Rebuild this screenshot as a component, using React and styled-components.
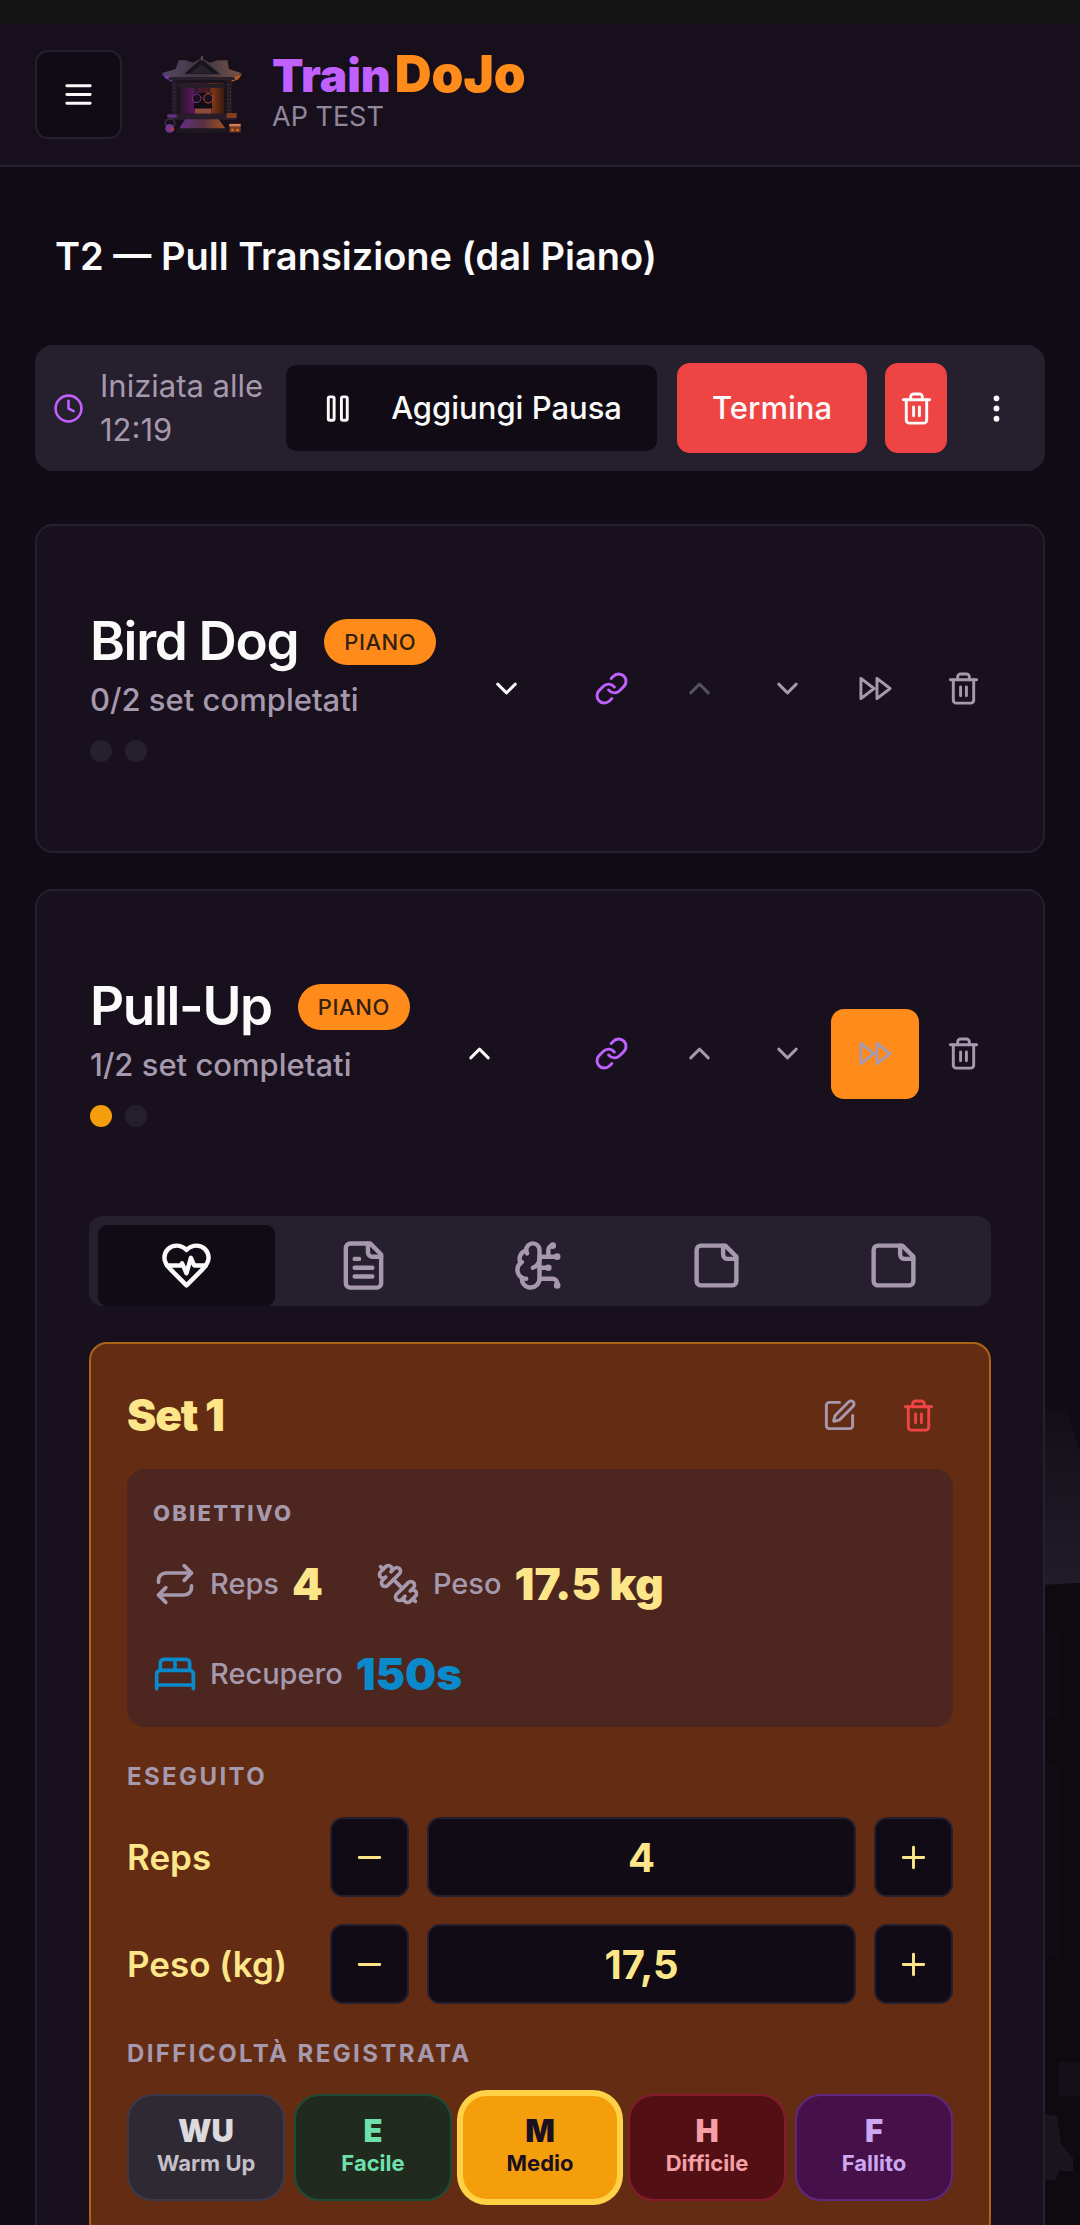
// module dependencies
import React, { useState } from 'react';
import styled, { createGlobalStyle, css } from 'styled-components';
import { BrainCircuit, ChevronDown, ChevronUp, Link, SquarePen, Trash2 } from 'lucide-react';

const colors = {
  background: '#100b14',
  card: '#18101d',
  border: '#261f2d',
  text: '#fafafa',
  muted: '#a699ae',
  purple: '#c061ff',
  orange: '#ff8c1a',
  amber: '#f59e0b',
  cream: '#fde68a',
  red: '#ef4444'
};

const GlobalStyle = createGlobalStyle`
  *, *::before, *::after {
    box-sizing: border-box;
  }
  body {
    margin: 0;
    background: ${colors.background};
    color: ${colors.text};
    font-family: Inter, 'Liberation Sans', sans-serif;
    font-size: 31px;
    line-height: 44px;
  }
  button, input {
    font: inherit;
    color: inherit;
    margin: 0;
  }
  h1, h2, h3, h4, p {
    margin: 0;
  }
  svg {
    display: block;
    flex: none;
  }
`;

const Shell = styled.div`
  position: relative;
  isolation: isolate;
  display: flex;
  flex-direction: column;
  height: 100vh;
`;

const StatusStrip = styled.div`
  flex: none;
  height: 24px;
  background: #141414;
`;

const Backdrop = styled.svg`
  position: absolute;
  right: 0;
  bottom: 0;
  z-index: -1;
`;

const TopBar = styled.header`
  flex: none;
  display: flex;
  align-items: center;
  gap: 38px;
  padding: 26px 35px;
  background: #17101c;
  border-bottom: 2px solid ${colors.border};
`;

const MenuButton = styled.button`
  display: flex;
  align-items: center;
  justify-content: center;
  width: 87px;
  height: 89px;
  padding: 0;
  background: ${colors.background};
  border: 2px solid ${colors.border};
  border-radius: 13px;
`;

const Brand = styled.a`
  display: flex;
  align-items: center;
  gap: 27px;
  color: inherit;
  text-decoration: none;
`;

const BrandName = styled.div`
  display: flex;
  align-items: baseline;
  gap: 4px;
  font-size: 46px;
  font-weight: 900;
  line-height: 44px;
`;

const BrandTrain = styled.span`
  color: ${colors.purple};
`;

const BrandDojo = styled.span`
  color: ${colors.orange};
  font-size: 51px;
`;

const BrandUser = styled.div`
  color: #91869b;
  font-size: 27px;
  line-height: 40px;
`;

const Main = styled.main`
  flex: 1;
  min-height: 0;
  overflow-y: auto;
  scrollbar-width: none;
  padding: 0 35px 36px;
`;

const PageTitle = styled.h1`
  padding: 65px 20px;
  font-size: 38px;
  font-weight: 600;
  line-height: 48px;
`;

const SessionBar = styled.section`
  display: flex;
  align-items: center;
  gap: 18px;
  padding: 18px;
  margin-bottom: 53px;
  background: ${colors.border};
  border-radius: 18px;
`;

const StartedAt = styled.div`
  flex: 1;
  display: flex;
  align-items: center;
  gap: 16px;
  color: ${colors.muted};

  svg {
    color: ${colors.purple};
  }
`;

const BarButton = styled.button`
  display: flex;
  align-items: center;
  justify-content: center;
  height: 90px;
  padding: 0 33px;
  background: transparent;
  border: 2px solid transparent;
  border-radius: 13px;
  font-weight: 500;

  ${props => props.$compact && css`
    width: 62px;
    padding: 0;
  `}

  ${props => props.$variant === 'outline' && css`
    gap: 35px;
    padding: 0 35px;
    background: ${colors.background};
    border-color: ${colors.border};
  `}

  ${props => props.$variant === 'danger' && css`
    background: ${colors.red};
    border-color: ${colors.red};
  `}
`;

const Card = styled.article`
  margin-bottom: 36px;
  background: ${colors.card};
  border: 2px solid ${colors.border};
  border-radius: 18px;
`;

const CardHead = styled.div`
  display: flex;
  align-items: center;
  justify-content: space-between;
  padding: 89px 36px 89px 53px;
`;

const Toggle = styled.div`
  display: flex;
  align-items: center;
  gap: 26px;
`;

const TitleRow = styled.div`
  display: flex;
  align-items: center;
  gap: 26px;
`;

const ExerciseName = styled.h2`
  font-size: 53px;
  font-weight: 600;
  line-height: 53px;
  letter-spacing: -0.025em;
`;

const Badge = styled.span`
  padding: 0 20px;
  background: ${colors.orange};
  border-radius: 23px;
  color: #33200f;
  font-size: 22px;
  font-weight: 500;
  line-height: 46px;
  letter-spacing: 0.025em;
`;

const Progress = styled.p`
  margin-top: 10px;
  color: ${colors.muted};
  font-weight: 500;
`;

const Dots = styled.div`
  display: flex;
  gap: 13px;
  margin-top: 18px;
`;

const Dot = styled.span`
  width: 22px;
  height: 22px;
  border-radius: 50%;
  background: ${props => props.$done ? colors.amber : colors.border};
`;

const Actions = styled.div`
  display: flex;
`;

const ActionButton = styled.button`
  display: flex;
  align-items: center;
  justify-content: center;
  width: 88px;
  height: 90px;
  padding: 0;
  background: ${props => props.$active ? colors.orange : 'transparent'};
  border: none;
  border-radius: 13px;
  color: ${props => props.$color || colors.muted};

  &:disabled {
    color: #575060;
  }
`;

const CardBody = styled.div`
  padding: 0 52px 52px;
`;

const TabList = styled.div`
  display: grid;
  grid-template-columns: repeat(5, 1fr);
  padding: 9px 9px 0;
  margin-bottom: 36px;
  background: ${colors.border};
  border-radius: 13px;
`;

const Tab = styled.button`
  display: flex;
  align-items: center;
  justify-content: center;
  height: 81px;
  padding: 0;
  background: ${props => props.$selected ? colors.background : 'transparent'};
  border: none;
  border-radius: 9px;
  color: ${props => props.$selected ? colors.text : colors.muted};
`;

const SetCard = styled.section`
  display: flex;
  flex-direction: column;
  gap: 27px;
  padding: 36px;
  background: #632c13;
  border: 2px solid #ab6514;
  border-radius: 18px;
`;

const SetTop = styled.div`
  display: flex;
  flex-direction: column;
  gap: 18px;
`;

const SetHead = styled.div`
  display: flex;
  align-items: center;
  justify-content: space-between;
`;

const SetName = styled.h3`
  color: ${colors.cream};
  font-size: 44px;
  font-weight: 900;
  line-height: 53px;
  letter-spacing: -0.025em;
`;

const SetActions = styled.div`
  display: flex;
  gap: 9px;
`;

const SetAction = styled.button`
  display: flex;
  align-items: center;
  justify-content: center;
  width: 70px;
  height: 71px;
  padding: 0;
  background: transparent;
  border: none;
  color: ${props => props.$danger ? colors.red : colors.muted};
`;

const Target = styled.div`
  padding: 26px;
  background: #4c261f;
  border-radius: 18px;
`;

const TargetTitle = styled.h4`
  margin-bottom: 26px;
  color: ${colors.muted};
  font-size: 22px;
  font-weight: 800;
  line-height: 36px;
  letter-spacing: 0.1em;
`;

const Metrics = styled.div`
  display: flex;
  flex-wrap: wrap;
  gap: 36px 53px;
`;

const Metric = styled.div`
  display: flex;
  align-items: center;
  gap: 13px;
  color: ${colors.muted};
  font-size: 29px;
  font-weight: 500;

  svg {
    color: ${props => props.$rest ? '#0a8acb' : colors.muted};
  }
`;

const MetricValue = styled.strong`
  color: ${props => props.$rest ? '#0a8acb' : colors.cream};
  font-size: 44px;
  font-weight: 900;
  line-height: 54px;
`;

const Section = styled.div`
  display: flex;
  flex-direction: column;
  gap: 18px;
`;

const SectionTitle = styled.h4`
  color: ${colors.muted};
  font-size: 24px;
  font-weight: 700;
  line-height: 45px;
  letter-spacing: 0.1em;
`;

const Fields = styled.div`
  display: grid;
  gap: 27px;
`;

const Field = styled.div`
  display: grid;
  grid-template-columns: 185px 79px 1fr 79px;
  align-items: center;
  gap: 18px;
  color: ${colors.cream};
`;

const FieldLabel = styled.label`
  font-size: 35px;
  font-weight: 600;
  white-space: nowrap;
`;

const StepButton = styled.button`
  display: flex;
  align-items: center;
  justify-content: center;
  height: 80px;
  padding: 0;
  background: ${colors.background};
  border: 2px solid ${colors.border};
  border-radius: 13px;
`;

const FieldInput = styled.input`
  width: 100%;
  height: 80px;
  padding: 0;
  background: ${colors.background};
  border: 2px solid ${colors.border};
  border-radius: 13px;
  outline: none;
  font-size: 40px;
  font-weight: 700;
  text-align: center;
`;

const Levels = styled.div`
  display: grid;
  grid-template-columns: repeat(5, 1fr);
  gap: 9px;
`;

const levelColors = {
  WU: { background: '#2e2933', border: '#3d384a', text: '#c3bfc8', code: '#dcdade' },
  E: { background: '#202a1e', border: '#1b4d35', text: '#6ee0ab' },
  M: { background: '#f59e0b', border: '#ffd147', text: '#1a1020' },
  H: { background: '#521015', border: '#851b2c', text: '#f5a0a6' },
  F: { background: '#461148', border: '#5f2780', text: '#cda8f0' }
};

const Level = styled.button`
  display: flex;
  flex-direction: column;
  align-items: center;
  justify-content: center;
  height: 107px;
  padding: 0;
  background: ${props => levelColors[props.$code].background};
  border: 2px solid ${props => levelColors[props.$code].border};
  border-radius: 26px;
  box-shadow: ${props => props.$selected ? `0 0 0 4px ${levelColors[props.$code].border}` : 'none'};
  color: ${props => levelColors[props.$code].text};
`;

const LevelCode = styled.span`
  color: ${props => levelColors[props.$code].code || 'inherit'};
  font-size: 31px;
  font-weight: 900;
  line-height: 31px;
`;

const LevelName = styled.span`
  font-size: 22px;
  font-weight: 700;
  line-height: 35px;
`;

// icons
const Icon = ({ size = 35, children }) => (
  <svg
    width={size}
    height={size}
    viewBox="0 0 24 24"
    fill="none"
    stroke="currentColor"
    strokeWidth="2"
    strokeLinecap="round"
    strokeLinejoin="round"
    aria-hidden="true"
  >
    {children}
  </svg>
);

const MenuIcon = () => <Icon><path d="M4 6h16M4 12h16M4 18h16" /></Icon>;

const ClockIcon = () => (
  <Icon size={31}>
    <circle cx="12" cy="12" r="10" />
    <path d="M12 6v6l4 2" />
  </Icon>
);

const PauseIcon = () => (
  <Icon>
    <rect x="5" y="4" width="4" height="16" rx="1" />
    <rect x="14" y="4" width="4" height="16" rx="1" />
  </Icon>
);

const MoreIcon = () => (
  <Icon>
    <circle cx="12" cy="12" r="1" />
    <circle cx="12" cy="5" r="1" />
    <circle cx="12" cy="19" r="1" />
  </Icon>
);

const SkipIcon = () => (
  <Icon>
    <path d="m13 19 9-7-9-7zM2 19l9-7-9-7z" />
  </Icon>
);

const HeartIcon = () => (
  <Icon size={53}>
    <path d="M19 14c1.49-1.46 3-3.21 3-5.5A5.5 5.5 0 0 0 16.5 3c-1.76 0-3 .5-4.5 2-1.5-1.5-2.74-2-4.5-2A5.5 5.5 0 0 0 2 8.5c0 2.3 1.5 4.05 3 5.5l7 7Z" />
    <path d="M3.22 12H9.5l.5-1 2 4.5 2-7 1.5 3.5h5.27" />
  </Icon>
);

const FileIcon = () => (
  <Icon size={53}>
    <path d="M15 2H6a2 2 0 0 0-2 2v16a2 2 0 0 0 2 2h12a2 2 0 0 0 2-2V7Z" />
    <path d="M14 2v4a2 2 0 0 0 2 2h4M10 9H8M16 13H8M16 17H8" />
  </Icon>
);

const NoteIcon = () => (
  <Icon size={53}>
    <path d="M16 3H5a2 2 0 0 0-2 2v14a2 2 0 0 0 2 2h14a2 2 0 0 0 2-2V8Z" />
    <path d="M15 3v4a2 2 0 0 0 2 2h4" />
  </Icon>
);

const RepeatIcon = () => (
  <Icon size={44}>
    <path d="m17 2 4 4-4 4" />
    <path d="M3 11v-1a4 4 0 0 1 4-4h14" />
    <path d="m7 22-4-4 4-4" />
    <path d="M21 13v1a4 4 0 0 1-4 4H3" />
  </Icon>
);

const DumbbellIcon = () => (
  <Icon size={44}>
    <path d="M14.4 14.4 9.6 9.6" />
    <path d="M18.657 21.485a2 2 0 1 1-2.829-2.828l-1.767 1.768a2 2 0 1 1-2.829-2.829l6.364-6.364a2 2 0 1 1 2.829 2.829l-1.768 1.767a2 2 0 1 1 2.828 2.829z" />
    <path d="m21.5 21.5-1.4-1.4M3.9 3.9 2.5 2.5" />
    <path d="M6.404 12.768a2 2 0 1 1-2.829-2.829l1.768-1.767a2 2 0 1 1-2.828-2.829l2.828-2.828a2 2 0 1 1 2.829 2.828l1.767-1.768a2 2 0 1 1 2.829 2.829z" />
  </Icon>
);

const BedIcon = () => (
  <Icon size={44}>
    <path d="M2 20v-8a2 2 0 0 1 2-2h16a2 2 0 0 1 2 2v8" />
    <path d="M4 10V6a2 2 0 0 1 2-2h12a2 2 0 0 1 2 2v4M12 4v6M2 18h20" />
  </Icon>
);

const MinusIcon = () => <Icon><path d="M5 12h14" /></Icon>;
const PlusIcon = () => <Icon><path d="M5 12h14M12 5v14" /></Icon>;

// small temple lit purple from the left and orange from the right
const TempleLogo = () => (
  <svg width="85" height="78" viewBox="60 47 255 234" aria-hidden="true">
    <defs>
      <linearGradient id="roof" x1="0" x2="1">
        <stop offset="0" stopColor="#574765" />
        <stop offset="0.5" stopColor="#3c3541" />
        <stop offset="1" stopColor="#765548" />
      </linearGradient>
      <linearGradient id="wall" x1="0" x2="1">
        <stop offset="0" stopColor="#2b1731" />
        <stop offset="0.3" stopColor="#571757" />
        <stop offset="0.55" stopColor="#40191f" />
        <stop offset="0.75" stopColor="#7b3618" />
        <stop offset="1" stopColor="#39190f" />
      </linearGradient>
      <linearGradient id="steps" x1="0" x2="1">
        <stop offset="0" stopColor="#65308a" />
        <stop offset="0.5" stopColor="#573143" />
        <stop offset="1" stopColor="#a05220" />
      </linearGradient>
    </defs>
    <path d="M98 112h178v108H98z" fill="#1b141d" />
    <path d="M122 128h130v92H122z" fill="url(#wall)" />
    <path d="M116 60h22l20 7 26-13 26 13 22-7h30l5 26 38 13-20 12H86L65 99l42-13z" fill="url(#roof)" />
    <path d="M184 54 130 102h112z" fill="#18141c" stroke="#423844" strokeWidth="3" />
    <path d="M184 72 152 98h66z" fill="#29222e" />
    <path d="M183 48h6v12h-6z" fill="#5d5060" />
    <path d="m66 101 30 12 1 12-21-11z" fill="#7a35a9" />
    <path d="m306 101-32 12-2 13 24-10z" fill="#b95b20" />
    <path d="M86 111h198v8H86z" fill="#28212b" />
    <path d="M96 119h14v103H96zM261 119h14v103h-14z" fill="#211b28" />
    <path d="M98 130v82M105 130v82" stroke="#4b2f5e" strokeWidth="2" strokeDasharray="6 5" />
    <path d="M264 130v82M271 130v82" stroke="#76351e" strokeWidth="2" strokeDasharray="6 5" />
    <path d="M112 130h142v12H112z" fill="#241c26" />
    <path d="M162 132h13v24h-13zM202 132h8v22h-8z" fill="#292027" />
    <path d="M162 158h54v46h-54z" fill="#120c15" />
    <circle cx="170" cy="174" r="13" fill="#1b101f" stroke="#7e3988" strokeWidth="3" />
    <circle cx="205" cy="174" r="14" fill="#1b101f" stroke="#c44b3c" strokeWidth="3" />
    <path d="M165 205h48v15h-48z" fill="#8c4c3b" />
    <path d="M84 220h204v18H84z" fill="#291d2b" />
    <path d="M82 222h28v10H82z" fill="#633184" />
    <path d="M260 218h30v15h-30z" fill="#853d1c" />
    <path d="m136 237-20 30h142l-22-30z" fill="url(#steps)" />
    <path d="M108 264h154v13H108z" fill="#1d1720" />
    <circle cx="90" cy="249" r="14" fill="none" stroke="#3b2c44" strokeWidth="5" />
    <circle cx="89" cy="264" r="13" fill="#733793" />
    <circle cx="97" cy="266" r="6" fill="#b33a42" />
    <path d="M268 250h34v26h-34z" fill="#783b1d" />
    <path d="M268 251h34v7h-34z" fill="#cf8056" />
    <path d="M274 265h7v8h-7zM289 265h7v8h-7z" fill="#d26a2b" />
  </svg>
);

const exercises = [
  { name: 'Bird Dog', done: 0, total: 2 },
  { name: 'Pull-Up', done: 1, total: 2, open: true, skip: true }
];

const tabs = [
  { label: 'Serie', icon: <HeartIcon /> },
  { label: 'Descrizione', icon: <FileIcon /> },
  { label: 'Focus', icon: <BrainCircuit size={53} /> },
  { label: 'Note', icon: <NoteIcon /> },
  { label: 'Note coach', icon: <NoteIcon /> }
];

const levels = [
  { code: 'WU', name: 'Warm Up' },
  { code: 'E', name: 'Facile' },
  { code: 'M', name: 'Medio' },
  { code: 'H', name: 'Difficile' },
  { code: 'F', name: 'Fallito' }
];

// components
function Stepper({ id, label, initial, step }) {
  const [value, setValue] = useState(initial);

  const change = (amount) => {
    const next = parseFloat(value.replace(',', '.')) + amount;
    setValue(String(Math.max(0, next || 0)).replace('.', ','));
  };

  return (
    <Field>
      <FieldLabel htmlFor={id}>{label}</FieldLabel>
      <StepButton type="button" aria-label={`Diminuisci ${label}`} onClick={() => change(-step)}>
        <MinusIcon />
      </StepButton>
      <FieldInput id={id} inputMode="decimal" value={value} onChange={e => setValue(e.target.value)} />
      <StepButton type="button" aria-label={`Aumenta ${label}`} onClick={() => change(step)}>
        <PlusIcon />
      </StepButton>
    </Field>
  );
}

function SetPanel() {
  const [level, setLevel] = useState('M');

  return (
    <SetCard>
      <SetTop>
        <SetHead>
          <SetName>Set 1</SetName>
          <SetActions>
            <SetAction type="button" aria-label="Modifica set"><SquarePen size={35} /></SetAction>
            <SetAction type="button" aria-label="Elimina set" $danger><Trash2 size={35} /></SetAction>
          </SetActions>
        </SetHead>
        <Target>
          <TargetTitle>OBIETTIVO</TargetTitle>
          <Metrics>
            <Metric><RepeatIcon />Reps <MetricValue>4</MetricValue></Metric>
            <Metric><DumbbellIcon />Peso <MetricValue>17.5 kg</MetricValue></Metric>
            <Metric $rest><BedIcon />Recupero <MetricValue $rest>150s</MetricValue></Metric>
          </Metrics>
        </Target>
      </SetTop>
      <Section>
        <SectionTitle>ESEGUITO</SectionTitle>
        <Fields>
          <Stepper id="reps" label="Reps" initial="4" step={1} />
          <Stepper id="weight" label="Peso (kg)" initial="17,5" step={0.5} />
        </Fields>
      </Section>
      <Section>
        <SectionTitle>DIFFICOLTÀ REGISTRATA</SectionTitle>
        <Levels>
          {levels.map(({ code, name }) => (
            <Level
              key={code}
              type="button"
              aria-pressed={level === code}
              $code={code}
              $selected={level === code}
              onClick={() => setLevel(code)}
            >
              <LevelCode $code={code}>{code}</LevelCode>
              <LevelName>{name}</LevelName>
            </Level>
          ))}
        </Levels>
      </Section>
    </SetCard>
  );
}

function Exercise({ name, done, total, open, skip, first }) {
  const [isOpened, setIsOpened] = useState(Boolean(open));
  const [tab, setTab] = useState(0);

  return (
    <Card>
      <CardHead>
        <Toggle>
          <div>
            <TitleRow>
              <ExerciseName>{name}</ExerciseName>
              <Badge>PIANO</Badge>
            </TitleRow>
            <Progress>{done}/{total} set completati</Progress>
            <Dots>
              {Array.from({ length: total }, (_, i) => <Dot key={i} $done={i < done} />)}
            </Dots>
          </div>
          <ActionButton
            type="button"
            $color={colors.text}
            aria-label={isOpened ? 'Chiudi' : 'Apri'}
            aria-expanded={isOpened}
            onClick={() => setIsOpened(!isOpened)}
          >
            {isOpened ? <ChevronUp size={35} /> : <ChevronDown size={35} />}
          </ActionButton>
        </Toggle>
        <Actions>
          <ActionButton type="button" aria-label="Collega" $color={colors.purple}><Link size={35} /></ActionButton>
          <ActionButton type="button" aria-label="Sposta su" disabled={first}><ChevronUp size={35} /></ActionButton>
          <ActionButton type="button" aria-label="Sposta giù"><ChevronDown size={35} /></ActionButton>
          <ActionButton type="button" aria-label="Salta" $active={skip}><SkipIcon /></ActionButton>
          <ActionButton type="button" aria-label="Elimina"><Trash2 size={35} /></ActionButton>
        </Actions>
      </CardHead>
      {isOpened && (
        <CardBody>
          <TabList role="tablist">
            {tabs.map(({ label, icon }, i) => (
              <Tab
                key={label}
                type="button"
                role="tab"
                aria-label={label}
                aria-selected={tab === i}
                $selected={tab === i}
                onClick={() => setTab(i)}
              >
                {icon}
              </Tab>
            ))}
          </TabList>
          <SetPanel />
        </CardBody>
      )}
    </Card>
  );
}

export default function App() {
  return (
    <>
      <GlobalStyle />
      <Shell>
        <Backdrop width="36" height="885" viewBox="0 0 36 885" aria-hidden="true">
          <defs>
            <linearGradient id="stone" x1="0" y1="0" x2="0" y2="1">
              <stop offset="0" stopColor="#130f17" />
              <stop offset="1" stopColor="#221b29" />
            </linearGradient>
          </defs>
          <path d="M0 10h20l2 60H0z" fill="#110c15" />
          <path d="M0 70h22l14 42v131L0 245z" fill="url(#stone)" />
          <path d="M0 245l36-2v642H0z" fill="#0d0a10" />
          <path d="M0 292h15v85H0zM0 426h15v190H0z" fill="#110c16" />
          <path d="M15 722h21v34H15z" fill="#131017" />
          <path d="M0 774l13 2 4 28 12 14v14l-14-2-4 10H0z" fill="#1a1620" />
        </Backdrop>
        <StatusStrip />
        <TopBar>
          <MenuButton type="button" aria-label="Menu"><MenuIcon /></MenuButton>
          <Brand href="#">
            <TempleLogo />
            <div>
              <BrandName>
                <BrandTrain>Train</BrandTrain>
                <BrandDojo>DoJo</BrandDojo>
              </BrandName>
              <BrandUser>AP TEST</BrandUser>
            </div>
          </Brand>
        </TopBar>
        <Main>
          <PageTitle>T2 — Pull Transizione (dal Piano)</PageTitle>
          <SessionBar>
            <StartedAt>
              <ClockIcon />
              <span>Iniziata alle 12:19</span>
            </StartedAt>
            <BarButton type="button" $variant="outline"><PauseIcon />Aggiungi Pausa</BarButton>
            <BarButton type="button" $variant="danger">Termina</BarButton>
            <BarButton type="button" $variant="danger" $compact aria-label="Elimina allenamento">
              <Trash2 size={35} />
            </BarButton>
            <BarButton type="button" $compact aria-label="Altre opzioni"><MoreIcon /></BarButton>
          </SessionBar>
          {exercises.map((exercise, i) => (
            <Exercise key={exercise.name} first={i === 0} {...exercise} />
          ))}
        </Main>
      </Shell>
    </>
  );
}
